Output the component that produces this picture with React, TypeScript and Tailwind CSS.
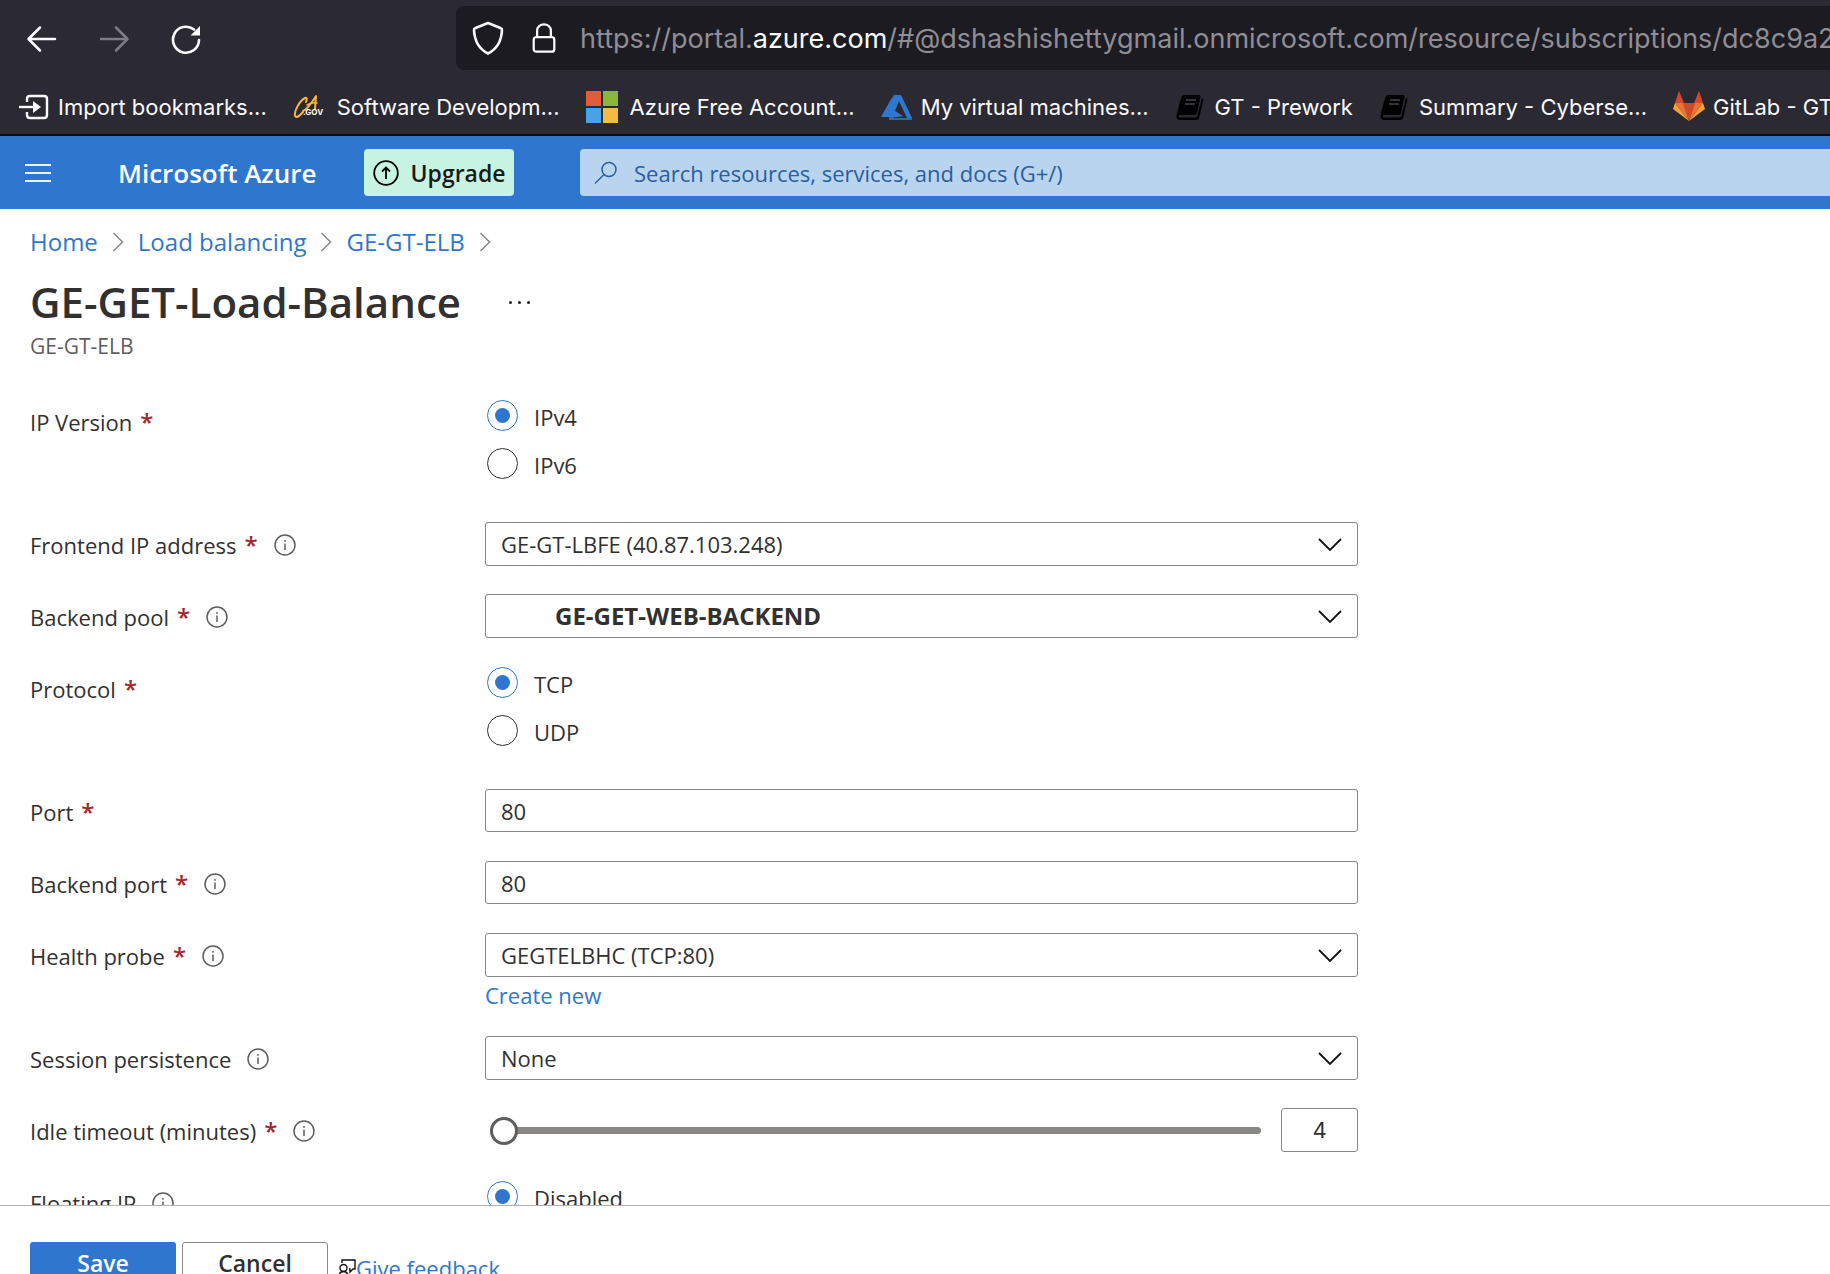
import React, { useState } from "react";

function ImportIcon() {
  return (
    <svg viewBox="0 0 32 32" className="h-8 w-8 shrink-0" fill="none" stroke="#fbfbfe" strokeWidth="2.4">
      <path d="M9 11V8q0-3 3-3h14q3 0 3 3v16q0 3-3 3H12q-3 0-3-3v-3" />
      <path d="M1 16h15" />
      <path d="M15 10v12l8-6z" fill="#fbfbfe" stroke="none" />
    </svg>
  );
}

function CaGovIcon() {
  return (
    <svg viewBox="0 0 32 32" className="h-8 w-8 shrink-0" fill="none">
      <g stroke="#f9b53c" strokeWidth="2" strokeLinecap="round" strokeLinejoin="round">
        <path d="M13 11q2-5-1-4C6 10 1 21 2 25q2 3 8-4" />
        <path d="M10 20c5-2 9-9 13-15l-1 13" />
        <path d="M14 14q5-3 10-2" strokeWidth="1.500" />
      </g>
      <text x="10" y="24" fontSize="8" fontWeight="700" fill="#ffffff" fontFamily="Inter, sans-serif">.GOV</text>
    </svg>
  );
}

function WindowsIcon() {
  return (
    <svg viewBox="0 0 32 32" className="h-8 w-8 shrink-0">
      <path fill="#e35b38" d="M0 0h15v15H0z" />
      <path fill="#8bb738" d="M17 0h15v15H17z" />
      <path fill="#46a3e8" d="M0 17h15v15H0z" />
      <path fill="#f5ba42" d="M17 17h15v15H17z" />
    </svg>
  );
}

function AzureIcon() {
  return (
    <svg viewBox="0 0 32 32" className="h-8 w-8 shrink-0">
      <path fill="#2f78cf" d="M13 4h7l11 23h-5L18 10l-4 10 8 5-12 2h16l5 0v2H8z" />
      <path fill="#2f78cf" d="M13 4h5L9 26H0l9-16z" />
      <path fill="#2a6d9c" d="M8 27h23v2H9z" />
    </svg>
  );
}

function BookIcon() {
  return (
    <svg viewBox="0 0 32 32" className="h-8 w-8 shrink-0">
      <path fill="#000" d="M9 4h15q2 0 1.500 2L22 22q-.5 2-2.500 2H5q-2 1-.5 2.500h15.500q2 0 2.500-2L27 7l1.500 1-4 18q-.6 3-3.500 3H4q-3-1-2.500-5L6 7q.8-3 3-3z" />
      <path stroke="#45444c" strokeWidth="1.500" d="M11 9h10M10 13h10" />
    </svg>
  );
}

function GitLabIcon() {
  return (
    <svg viewBox="0 0 32 32" className="h-8 w-8 shrink-0">
      <path fill="#d5492b" d="M16 30l6-18H10zM2 12L6 0l5 12zM30 12L26 0l-5 12z" />
      <path fill="#ed7233" d="M16 30L10 12H2zM16 30l6-18h8z" />
      <path fill="#f2a33c" d="M2 12l-2 6 16 12zM30 12l2 6-16 12z" />
    </svg>
  );
}

const bookmarks = [
  { icon: <ImportIcon />, text: "Import bookmarks...", gap: "gap-2" },
  { icon: <CaGovIcon />, text: "Software Developm...", gap: "gap-3" },
  { icon: <WindowsIcon />, text: "Azure Free Account...", gap: "gap-3" },
  { icon: <AzureIcon />, text: "My virtual machines...", gap: "gap-2" },
  { icon: <BookIcon />, text: "GT - Prework", gap: "gap-2" },
  { icon: <BookIcon />, text: "Summary - Cyberse...", gap: "gap-2" },
  { icon: <GitLabIcon />, text: "GitLab - GT", gap: "gap-2" },
];

function BrowserChrome() {
  return (
    <div className="shrink-0 overflow-hidden border-b-2 border-[#0c0c0d] bg-[#2b2a33] font-['Inter',sans-serif] text-[#fbfbfe]">
      <div className="flex h-[76px] items-center">
        <div className="flex w-[456px] shrink-0 items-center gap-10 pt-0.5 pl-[26px]">
          <button aria-label="Back" className="h-8 w-8">
            <svg viewBox="0 0 32 32" fill="none" stroke="#fbfbfe" strokeWidth="2.500" strokeLinecap="round" strokeLinejoin="round">
              <path d="M29 16H3M14 4.500L2.500 16 14 27.500" />
            </svg>
          </button>
          <button aria-label="Forward" className="h-8 w-8">
            <svg viewBox="0 0 32 32" fill="none" stroke="#7d7c83" strokeWidth="2.500" strokeLinecap="round" strokeLinejoin="round">
              <path d="M3 16h26M18 4.500L29.500 16 18 27.500" />
            </svg>
          </button>
          <button aria-label="Reload" className="h-8 w-8">
            <svg viewBox="0 0 32 32" fill="none" stroke="#fbfbfe" strokeWidth="2.600" strokeLinecap="round">
              <path d="M29 17a13 13 0 1 1-5-10.500" />
              <path d="M30 3v9.500h-9.500z" fill="#fbfbfe" stroke="none" />
            </svg>
          </button>
        </div>
        <div className="flex h-16 min-w-0 flex-1 items-center overflow-hidden rounded-l-lg bg-[#1c1b22] pl-4">
          <svg viewBox="0 0 32 36" className="h-9 w-8 shrink-0" fill="none" stroke="#fbfbfe" strokeWidth="2.600" strokeLinejoin="round">
            <path d="M16 3l12.500 5q1.500.6 1.500 2C29.500 21 25 29 16 33.500 7 29 2.500 21 2 10q0-1.400 1.500-2z" />
          </svg>
          <svg viewBox="0 0 28 36" className="mr-5 ml-7 h-9 w-6 shrink-0" fill="none" stroke="#fbfbfe" strokeWidth="2.600">
            <rect x="2" y="17" width="24" height="17" rx="3" />
            <path d="M6 17V9a8 7 0 0 1 16 0v8" />
          </svg>
          <div role="textbox" aria-label="Address" tabIndex={0} className="ml-1 pt-0.5 whitespace-nowrap text-[27px] text-[#8f8e94]">
            https://portal.<span className="text-[#fbfbfe]">azure.com</span>/#@dshashishettygmail.onmicrosoft.com/resource/subscriptions/dc8c9a2f
          </div>
        </div>
      </div>
      <nav aria-label="Bookmarks" className="flex h-[58px] items-center gap-[26px] pt-1 pl-[18px]">
        {bookmarks.map((b) => (
          <a key={b.text} href="#" className={`flex shrink-0 items-center whitespace-nowrap text-[22px] ${b.gap}`}>
            {b.icon}
            {b.text}
          </a>
        ))}
      </nav>
    </div>
  );
}

function AzureHeader() {
  return (
    <header className="flex h-[73px] shrink-0 items-center overflow-hidden bg-[#2f77ce]">
      <button aria-label="Show portal menu" className="ml-[25px] flex w-[26px] shrink-0 flex-col gap-1.5">
        <span className="h-0.5 w-full bg-white/90" />
        <span className="h-0.5 w-full bg-white/90" />
        <span className="h-0.5 w-full bg-white/90" />
      </button>
      <a href="#" className="ml-[67px] w-[246px] shrink-0 whitespace-nowrap text-[26px] font-semibold text-white">Microsoft Azure</a>
      <button className="flex h-[47px] w-[150px] shrink-0 items-center justify-center gap-3 rounded-sm bg-[#c7f4e2] text-[23px] font-semibold text-[#1b1a19]">
        <svg viewBox="0 0 26 26" className="h-[26px] w-[26px]" fill="none" stroke="#000" strokeWidth="1.800">
          <circle cx="13" cy="13" r="11.800" />
          <path d="M13 19V7.500M9 11.500l4-4 4 4" />
        </svg>
        Upgrade
      </button>
      <label className="ml-[66px] flex h-[47px] min-w-0 flex-1 items-center rounded-l-sm bg-[#b9d4ef] pl-3.5">
        <svg viewBox="0 0 24 24" className="h-6 w-6 shrink-0" fill="none" stroke="#2a5e9e" strokeWidth="1.500">
          <circle cx="15" cy="8.500" r="7" />
          <path d="M10 13.500L1 22.500" />
        </svg>
        <input
          type="search"
          aria-label="Search"
          placeholder="Search resources, services, and docs (G+/)"
          className="ml-4 min-w-0 flex-1 bg-transparent text-[22px] outline-none placeholder:text-[#2a5e9e]"
        />
      </label>
    </header>
  );
}

function CrumbArrow() {
  return (
    <svg viewBox="0 0 12 20" className="h-5 w-3" fill="none" stroke="#8a8886" strokeWidth="1.500">
      <path d="M1.500 1l9 9-9 9" />
    </svg>
  );
}

function InfoIcon() {
  return (
    <svg viewBox="0 0 22 22" role="img" aria-label="Info" className="h-[22px] w-[22px] shrink-0" fill="none" stroke="#605e5c" strokeWidth="1.500">
      <circle cx="11" cy="11" r="10" />
      <path d="M11 9.500v6.500M11 6v1.800" />
    </svg>
  );
}

type RowProps = {
  label: string;
  htmlFor?: string;
  required?: boolean;
  info?: boolean;
  size?: string;
  children: React.ReactNode;
};

function Row({ label, htmlFor, required, info, size = "h-11", children }: RowProps) {
  return (
    <div className={`grid grid-cols-[455px_minmax(0,873px)] ${size}`} role={htmlFor ? undefined : "radiogroup"} aria-label={htmlFor ? undefined : label}>
      <div className="flex h-[46px] items-center">
        <label htmlFor={htmlFor}>{label}</label>
        {required && <span className="ml-2 text-[24px] font-semibold text-[#a4262c]">*</span>}
        {info && <span className="ml-4"><InfoIcon /></span>}
      </div>
      <div>{children}</div>
    </div>
  );
}

function Radios({ name, options }: { name: string; options: string[] }) {
  const [value, setValue] = useState(options[0]);
  return (
    <div className="flex flex-col gap-4 pl-0.5">
      {options.map((o) => (
        <label key={o} className="flex h-8 items-center gap-4">
          <input
            type="radio"
            name={name}
            checked={value === o}
            onChange={() => setValue(o)}
            className="h-[31px] w-[31px] shrink-0 appearance-none rounded-full border border-[#323130] bg-white bg-clip-content p-[7px] checked:border-[#2f77ce] checked:bg-[#2f77ce]"
          />
          <span className="pt-1">{o}</span>
        </label>
      ))}
    </div>
  );
}

function Select({ id, value, bold }: { id: string; value: string; bold?: boolean }) {
  return (
    <div className="relative">
      <select
        id={id}
        className={`h-11 w-full appearance-none rounded-[3px] border border-[#8a8886] bg-white pr-14 ${bold ? "pl-[69px] text-[24px] font-bold" : "pl-[15px]"}`}
      >
        <option>{value}</option>
      </select>
      <svg viewBox="0 0 24 14" className="pointer-events-none absolute top-4 right-4 h-3.5 w-6" fill="none" stroke="#111" strokeWidth="1.800">
        <path d="M1 1l11 11L23 1" />
      </svg>
    </div>
  );
}

const inputClass = "h-[43px] w-full rounded-[3px] border border-[#8a8886] bg-white px-[15px]";

export default function App() {
  const [timeout, setTimeoutValue] = useState(4);
  return (
    <div className="flex h-screen flex-col overflow-hidden bg-white font-['Open_Sans',sans-serif] text-[22px] leading-8 text-[#323130]">
      <BrowserChrome />
      <AzureHeader />
      <main className="min-h-0 flex-1 overflow-hidden px-[30px] pt-[17px]">
        <nav aria-label="Breadcrumb" className="flex items-center gap-3.5 text-[24px] text-[#2f77ce]">
          <a href="#">Home</a>
          <CrumbArrow />
          <a href="#">Load balancing</a>
          <CrumbArrow />
          <a href="#">GE-GT-ELB</a>
          <CrumbArrow />
        </nav>
        <div className="mt-[18px] flex items-center gap-12">
          <h1 className="text-[42px] leading-[52px] font-semibold">GE-GET-Load-Balance</h1>
          <button aria-label="More actions" className="flex gap-1.5">
            <span className="h-[3px] w-[3px] rounded-full bg-[#222]" />
            <span className="h-[3px] w-[3px] rounded-full bg-[#222]" />
            <span className="h-[3px] w-[3px] rounded-full bg-[#222]" />
          </button>
        </div>
        <p className="mt-0.5 text-[21px] text-[#605e5c]">GE-GT-ELB</p>

        <form className="mt-[37px] flex flex-col gap-7">
          <Row label="IP Version" required size="h-[95px]">
            <Radios name="ip-version" options={["IPv4", "IPv6"]} />
          </Row>
          <Row label="Frontend IP address" htmlFor="frontend" required info>
            <Select id="frontend" value="GE-GT-LBFE (40.87.103.248)" />
          </Row>
          <Row label="Backend pool" htmlFor="pool" required info>
            <Select id="pool" value="GE-GET-WEB-BACKEND" bold />
          </Row>
          <Row label="Protocol" required size="h-[95px]">
            <Radios name="protocol" options={["TCP", "UDP"]} />
          </Row>
          <Row label="Port" htmlFor="port" required>
            <input id="port" defaultValue="80" className={inputClass} />
          </Row>
          <Row label="Backend port" htmlFor="backend-port" required info>
            <input id="backend-port" defaultValue="80" className={inputClass} />
          </Row>
          <Row label="Health probe" htmlFor="probe" required info size="h-[75px]">
            <Select id="probe" value="GEGTELBHC (TCP:80)" />
            <a href="#" className="mt-0.5 block w-fit text-[#2f77ce]">Create new</a>
          </Row>
          <Row label="Session persistence" htmlFor="session" info>
            <Select id="session" value="None" />
          </Row>
          <Row label="Idle timeout (minutes)" htmlFor="idle" required info>
            <div className="flex items-center gap-5 pl-[5px]">
              <input
                id="idle"
                type="range"
                min={4}
                max={30}
                value={timeout}
                onChange={(e) => setTimeoutValue(Number(e.target.value))}
                className="h-7 min-w-0 flex-1 appearance-none bg-transparent [&::-webkit-slider-runnable-track]:h-[7px] [&::-webkit-slider-runnable-track]:rounded-full [&::-webkit-slider-runnable-track]:bg-[#8a8886] [&::-webkit-slider-thumb]:-mt-2.5 [&::-webkit-slider-thumb]:h-7 [&::-webkit-slider-thumb]:w-7 [&::-webkit-slider-thumb]:appearance-none [&::-webkit-slider-thumb]:rounded-full [&::-webkit-slider-thumb]:border-3 [&::-webkit-slider-thumb]:border-[#605e5c] [&::-webkit-slider-thumb]:bg-white"
              />
              <input
                aria-label="Idle timeout value"
                value={timeout}
                onChange={(e) => setTimeoutValue(Number(e.target.value) || 4)}
                className="h-11 w-[77px] shrink-0 rounded-[3px] border border-[#8a8886] bg-white text-center font-['Inter',sans-serif]"
              />
            </div>
          </Row>
          <Row label="Floating IP" info size="h-[95px]">
            <Radios name="floating-ip" options={["Disabled", "Enabled"]} />
          </Row>
        </form>
      </main>
      <footer className="flex h-[69px] shrink-0 items-start overflow-hidden border-t border-[#b3b0ad] bg-white pt-9 pl-[30px]">
        <button className="h-[42px] w-[146px] rounded-[3px] bg-[#2f77ce] text-[23px] font-semibold text-white">Save</button>
        <button className="ml-1.5 h-[42px] w-[146px] rounded-[3px] border border-[#8a8886] text-[23px] font-semibold">Cancel</button>
        <a href="#" className="ml-2.5 flex items-center pt-2.5 text-[#2f77ce]">
          <svg viewBox="0 0 18 18" className="h-[18px] w-[18px]" fill="none" stroke="#111" strokeWidth="1.400">
            <path d="M4 4V1h13v9h-2l-3 3v-3h-1" />
            <circle cx="5.500" cy="9" r="3.500" />
            <path d="M1 17q.5-4.500 4.500-4.500T10 17" />
          </svg>
          Give feedback
        </a>
      </footer>
    </div>
  );
}
